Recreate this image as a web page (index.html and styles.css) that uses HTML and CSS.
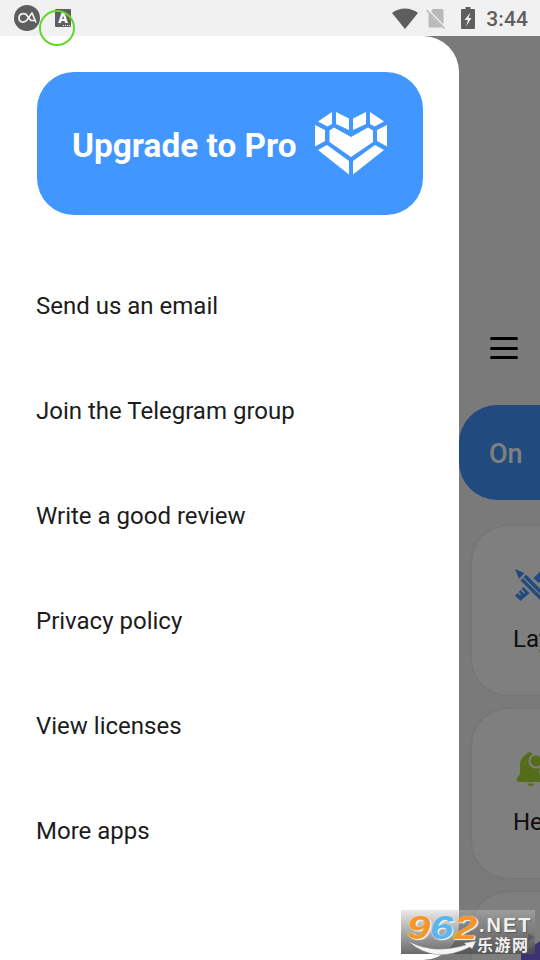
FILE: index.html
```html
<!DOCTYPE html>
<html lang="en">
	<head>
		<meta charset="utf-8">
		<title>Menu</title>
		<link rel="stylesheet" href="styles.css">
	</head>
	<body>
		<header class="status-bar">
			<svg class="status-app" width="26" height="26" viewBox="0 0 26 26">
				<circle cx="13" cy="13" r="13" fill="#5e5e5e"/>
				<path d="M13 10C10.500 8 5 8 5 13s5.500 5 8 2l5-7 4 9.500M12 9.500l5 6h4" fill="none" stroke="#f1f1f1" stroke-width="1.700" stroke-linejoin="round"/>
			</svg>
			<span class="status-a">A<i class="dots"></i></span>
			<div class="status-right">
				<svg width="26" height="21" viewBox="0 0 26 21"><path d="M0 5C7-1 19-1 26 5L13 21z" fill="#5e5e5e"/></svg>
				<svg width="20" height="21" viewBox="0 0 20 21"><path d="M7 1h9q1.500 0 1.500 1.500V16L5 3zM2.500 5L16.500 19.500H4q-1.500 0-1.500-1.500z" fill="#b9b9b9"/><path d="M3 5L17 19V3H7L3 6z" fill="#b9b9b9"/><path d="M1.500 1l18 18.500" stroke="#f1f1f1" stroke-width="1.500"/><path d="M.5 2l18 18.500" stroke="#b9b9b9" stroke-width="1.500"/></svg>
				<svg width="14" height="22" viewBox="0 0 14 22"><path d="M4.500 0h5v2H13q1 0 1 1v18q0 1-1 1H1q-1 0-1-1V3q0-1 1-1h3.500z" fill="#5e5e5e"/><path d="M9.500 5.500L3.500 13H7l-2 6.500L10.500 11H7.500z" fill="#f1f1f1"/></svg>
				<span class="clock">3:44</span>
			</div>
			<span class="ring"></span>
		</header>
		<main class="screen">
			<div class="page">
				<div class="burger"><i></i><i></i><i></i></div>
				<div class="power">On</div>
				<div class="card">
					<svg width="48" height="34" viewBox="0 0 48 34" fill="#4296ff">
						<path d="M0 2l9.500 4L4 12zM5.500 13.500l5.500-6 21 21-6 5.500z"/>
						<path d="M8 10.500l22 22" stroke="#fff" stroke-width="1.200"/>
						<path d="M0 28.500l2.500-2.500 2.500 2.500 1-1L3.500 25l2-2 3.500 3.500 1-1L6.500 22l2-2 6 6L5.500 34zM18.500 11L28 2l5 5-9.500 9z"/>
					</svg>
					<span>Layout</span>
				</div>
				<div class="card">
					<svg width="36" height="38" viewBox="0 0 36 38" fill="#aadb35">
						<path d="M11.500 4a3.500 3.500 0 0 1 6 0l7 7v14l4 3q2 4-1 4H4q-3.500 0-2-4l3-4V15Q5 8 11.500 4zM11.500 33.500h8q-4 5-8 0z"/>
						<circle cx="21" cy="11" r="6.500" stroke="#fff" stroke-width="2"/>
					</svg>
					<span>Heads</span>
				</div>
				<div class="card">
					<svg width="36" height="38" viewBox="0 0 36 38" fill="#7b64e8"><path d="M7-1l6 4-6 5zM0 10l8 5L19 7l17 8v23H0z"/></svg>
				</div>
			</div>
			<div class="scrim"></div>
			<nav class="drawer">
				<div class="upgrade">
					<span>Upgrade to Pro</span>
					<svg width="72" height="63" viewBox="0 0 72 63" fill="#fff">
						<path d="M3 9.500L17 0V12L12.500 14.500zM21 0l13 6.500V18L21 12zM51 0L38 6.500V18l13-6zM55 0l14 9.500-9.500 5L55 12z"/>
						<path d="M0 13l10 5v11L0 34.500zM72 13l-10 5v11l10 5.500z"/>
						<path d="M19 15.500L36 25l17-9.500 5 3V30L36 45 14.500 30V18.500z"/>
						<path d="M3 38l9-5 22 16v13.500zM69 38l-9-5-22 16v13.500z"/>
					</svg>
				</div>
				<ul class="menu">
					<li>Send us an email</li>
					<li>Join the Telegram group</li>
					<li>Write a good review</li>
					<li>Privacy policy</li>
					<li>View licenses</li>
					<li>More apps</li>
				</ul>
			</nav>
			<div class="badge">
				<div class="badge-num"><b>9</b><b class="blue">6</b><b>2</b></div>
				<div class="badge-text"><span>.NET</span><span class="cn">乐游网</span></div>
				<svg class="swoosh" width="68" height="18" viewBox="0 0 68 18"><path d="M0 0Q25 14 58 4L56 2l12-2-4 8-2-2Q26 24 0 0z" fill="#f5f5f5" stroke="#888" stroke-width=".5"/></svg>
			</div>
		</main>
	</body>
</html>
```
FILE: styles.css
```css
*{
	box-sizing: border-box;
}
body{
	margin: 0;
	height: 960px;
	overflow: hidden;
	font-family: Roboto, "Liberation Sans", sans-serif;
	color: #1c1c1c;
}
svg{
	display: block;
	flex: none;
}
.status-bar{
	position: relative;
	z-index: 2;
	display: flex;
	align-items: center;
	height: 36px;
	padding: 0 12px 0 14px;
	background-color: #f1f1f1;
}
.status-a{
	position: relative;
	width: 16px;
	height: 18px;
	margin-left: 15px;
	border-radius: 1px;
	background-color: #5e5e5e;
	color: #fff;
	font-size: 14px;
	font-weight: 900;
	line-height: 18px;
	text-align: center;
}
.dots{
	position: absolute;
	right: 1px;
	bottom: 1px;
	width: 7px;
	border-bottom: 1px dotted #fff;
}
.status-right{
	display: flex;
	align-items: center;
	margin-left: auto;
	height: 34px;
}
.status-right svg + svg{
	margin-left: 8px;
}
.status-right svg:nth-child(3){
	margin-left: 15px;
	margin-top: -1px;
}
.clock{
	margin-left: 11px;
	padding-top: 2px;
	color: #5e5e5e;
	font-size: 21px;
	font-weight: 500;
	letter-spacing: .1px;
}
.ring{
	position: absolute;
	left: 39px;
	top: 10px;
	width: 36px;
	height: 36px;
	border: 2px solid #62d62c;
	border-radius: 50%;
}
.screen{
	position: relative;
	height: 924px;
	overflow: hidden;
}
.page{
	display: flex;
	flex-direction: column;
	height: 924px;
	padding: 301px 0 0 459px;
	background-color: #f4f4f4;
}
.burger{
	display: flex;
	flex: none;
	flex-direction: column;
	justify-content: space-between;
	width: 28px;
	height: 22px;
	margin-left: 31px;
}
.burger i{
	height: 3px;
	border-radius: 2px;
	background-color: #000;
}
.power{
	flex: none;
	width: 120px;
	height: 95px;
	margin: 46px 0 12px;
	padding-left: 30px;
	border-radius: 38px;
	background-color: #4296ff;
	color: #fff;
	font-size: 27px;
	font-weight: 500;
	line-height: 99px;
}
.card{
	flex: none;
	width: 160px;
	height: 169px;
	margin: 14px 0 0 13px;
	padding: 41px 0 0 43px;
	border-radius: 36px;
	background-color: #fff;
	box-shadow: 0 0 2px #ccc;
	font-size: 24px;
}
.card span{
	display: block;
	margin: 24px 0 0 -2px;
	line-height: 28px;
}
.card:nth-child(4) span{
	margin-top: 20px;
}
.card:nth-child(5){
	padding: 42px 0 0 49px;
}
.scrim{
	position: absolute;
	inset: 0;
	background-color: rgba(0,0,0,.5);
}
.drawer{
	position: absolute;
	left: 0;
	top: 0;
	width: 459px;
	height: 924px;
	padding: 36px;
	border-radius: 0 36px 36px 0;
	background-color: #fff;
}
.upgrade{
	display: flex;
	align-items: center;
	justify-content: space-between;
	height: 143px;
	margin: 0 .5px;
	padding: 0 35.500px;
	border-radius: 37px;
	background-color: #4296ff;
	color: #fff;
	font-size: 33.400px;
	font-weight: 700;
	white-space: nowrap;
}
.upgrade span{
	padding-top: 3px;
}
.menu{
	margin: 39px 0 0;
	padding: 0;
	list-style: none;
	font-size: 24px;
	line-height: 105px;
	white-space: nowrap;
}
.badge{
	position: absolute;
	left: 401px;
	top: 874px;
	display: flex;
	width: 134px;
	height: 44px;
	background: linear-gradient(rgba(200,200,200,.4), rgba(80,80,80,.85));
}
.badge-num{
	display: flex;
	width: 78px;
	padding-left: 8px;
	color: #f79625;
	font: italic 700 34px/34px "Liberation Sans", sans-serif;
	text-shadow: 0 0 1px #fff, 1px 1px 1px #fff;
}
.badge-num b{
	width: 24px;
	transform: scaleX(1.25);
	transform-origin: 9px 0;
}
.badge-num .blue{
	color: #5cb5ea;
}
.badge-text{
	display: flex;
	flex-direction: column;
	padding-top: 5px;
	color: #f0f0f0;
	font: 700 20px/20px "Liberation Sans", sans-serif;
	letter-spacing: 2px;
	text-shadow: 1px 1px 1px #555;
}
.cn{
	margin: -1px 0 0 -2px;
	font: 700 16px/20px "Noto Sans CJK SC", sans-serif;
	letter-spacing: 1.500px;
}
.swoosh{
	position: absolute;
	left: 7px;
	top: 31px;
}
```
